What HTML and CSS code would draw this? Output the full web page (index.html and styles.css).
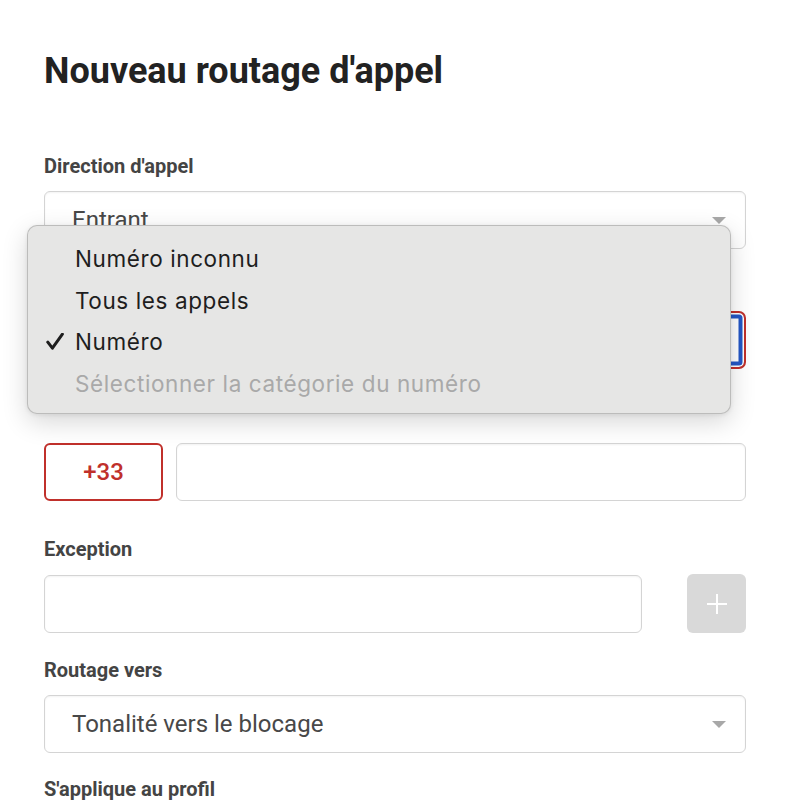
FILE: index.html
```html
<!DOCTYPE html>
<html lang="fr">
<head>
<meta charset="utf-8">
<title>Nouveau routage d'appel</title>
<link rel="stylesheet" href="styles.css">
</head>
<body>
<div class="page">
  <h1 class="title">Nouveau routage d'appel</h1>

  <div class="field field-direction">
    <div class="label">Direction d'appel</div>
    <div class="control select">
      <span class="value">Entrant</span>
      <span class="caret"></span>
    </div>
  </div>

  <div class="field field-type">
    <div class="control select select-focus">
      <span class="value"></span>
      <span class="caret"></span>
    </div>
  </div>

  <div class="row row-phone">
    <div class="control code">+33</div>
    <div class="control input grow"></div>
  </div>

  <div class="field field-exception">
    <div class="label">Exception</div>
    <div class="row row-exception">
      <div class="control input grow"></div>
      <div class="add-btn">
        <svg width="22" height="22" viewBox="0 0 22 22"><path d="M11 1v20M1 11h20" stroke="#fff" stroke-width="2" fill="none"/></svg>
      </div>
    </div>
  </div>

  <div class="field field-routage">
    <div class="label">Routage vers</div>
    <div class="control select">
      <span class="value">Tonalité vers le blocage</span>
      <span class="caret"></span>
    </div>
  </div>

  <div class="field field-profil">
    <div class="label">S'applique au profil</div>
  </div>

  <div class="menu">
    <div class="menu-item">Numéro inconnu</div>
    <div class="menu-item">Tous les appels</div>
    <div class="menu-item checked">
      <svg class="check" width="18" height="17" viewBox="0 0 18 17"><path d="M1.8 9.2l4.6 6 10-14" stroke="#1e1e1e" stroke-width="3" fill="none" stroke-linecap="round" stroke-linejoin="round"/></svg>
      Numéro
    </div>
    <div class="menu-item disabled">Sélectionner la catégorie du numéro</div>
  </div>
</div>
</body>
</html>
```

FILE: styles.css
```css
html, body {
  margin: 0;
  padding: 0;
  background: #ffffff;
}

body {
  font-family: Roboto, "Liberation Sans", Arial, sans-serif;
  color: #444444;
}

.page {
  position: relative;
  padding: 51px 46px 0 44px;
  width: 702px;
}

.title {
  margin: 0;
  font-size: 36px;
  line-height: 40px;
  font-weight: 700;
  color: #222222;
}

.label {
  font-size: 20px;
  line-height: 24px;
  font-weight: 700;
  color: #444444;
  margin-bottom: 13px;
}

.field-direction { margin-top: 63px; }
.field-type { margin-top: 62px; }
.row-phone { margin-top: 74px; }
.field-exception { margin-top: 36px; }
.field-routage { margin-top: 25px; }
.field-profil { margin-top: 24px; }

.control {
  box-sizing: border-box;
  height: 58px;
  border: 1.5px solid #d4d4d4;
  border-radius: 6px;
  background: #ffffff;
  box-shadow: inset 0 1px 2px rgba(0, 0, 0, 0.05);
}

.select {
  display: flex;
  align-items: center;
  justify-content: space-between;
  padding: 0 19px 0 27px;
}

.value {
  font-size: 24px;
  color: #484848;
}

.caret {
  width: 0;
  height: 0;
  border-left: 7px solid transparent;
  border-right: 7px solid transparent;
  border-top: 7px solid #a8a8a8;
}

.select-focus {
  border: 2px solid #c0302b;
  border-radius: 7px;
  box-shadow: inset 0 0 0 1.5px #ffffff, inset 0 0 0 5.5px #2457c5;
}

.row {
  display: flex;
  align-items: center;
}

.row-phone { gap: 13px; }
.row-exception { gap: 45px; }

.grow { flex: 1; }

.code {
  width: 119px;
  border: 2px solid #c0302b;
  display: flex;
  align-items: center;
  justify-content: center;
  font-size: 24px;
  font-weight: 500;
  color: #c0302b;
  box-shadow: none;
}

.add-btn {
  width: 59px;
  height: 59px;
  border-radius: 6px;
  background: #d9d9d9;
  display: flex;
  align-items: center;
  justify-content: center;
}

.menu {
  position: absolute;
  left: 27px;
  top: 225px;
  width: 704px;
  height: 189px;
  box-sizing: border-box;
  padding-top: 12px;
  background: #e6e6e5;
  border: 1px solid rgba(0, 0, 0, 0.18);
  border-radius: 10px;
  box-shadow: 0 8px 26px rgba(0, 0, 0, 0.16), 0 1px 4px rgba(0, 0, 0, 0.08);
  font-family: Inter, "Noto Sans", sans-serif;
}

.menu-item {
  position: relative;
  height: 41.7px;
  line-height: 41.7px;
  padding-left: 47px;
  font-size: 22.5px;
  letter-spacing: 0.6px;
  color: #1e1e1e;
}

.menu-item.disabled {
  color: #a9a9a9;
}

.check {
  position: absolute;
  left: 18px;
  top: 12px;
}
```
